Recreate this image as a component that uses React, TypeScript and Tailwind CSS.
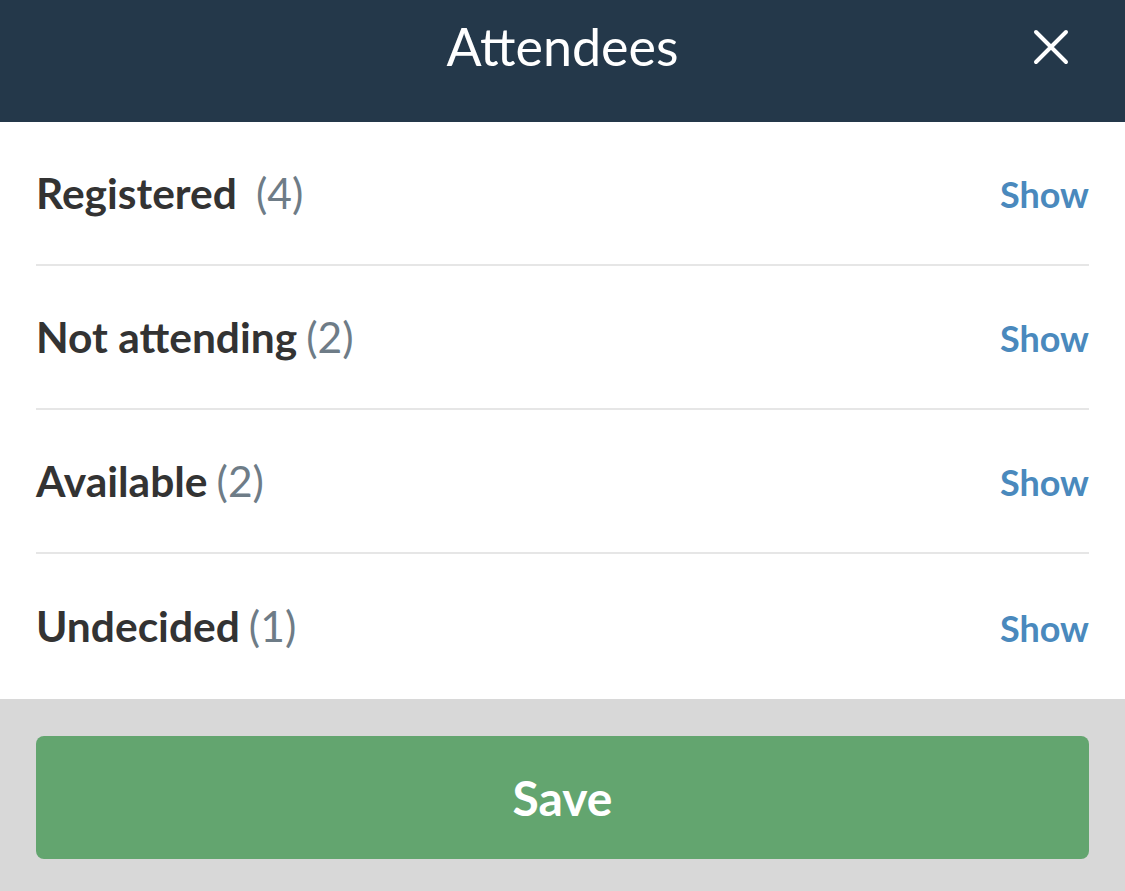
const rows = [
  { label: 'Registered', count: 4, gap: true },
  { label: 'Not attending', count: 2 },
  { label: 'Available', count: 2 },
  { label: 'Undecided', count: 1 },
];

export default function App() {
  return (
    <div className="flex h-[891px] w-full flex-col bg-[#d8d8d8] font-['Lato','Open_Sans',sans-serif]">
      {/* header */}
      <div className="relative flex h-[122px] items-center justify-center bg-[#24384a]">
        <h1 className="pb-[30px] text-[52px] leading-none text-white">Attendees</h1>
        <button className="absolute right-[56px] top-[29px] text-white">
          <svg width="36" height="36" viewBox="0 0 36 36" fill="none" stroke="currentColor" strokeWidth="4" strokeLinecap="round">
            <path d="M3 3L33 33M33 3L3 33" />
          </svg>
        </button>
      </div>

      {/* list */}
      <div className="bg-white px-[36px]">
        {rows.map((r, i) => (
          <div
            key={r.label}
            className={`flex items-center justify-between ${i < rows.length - 1 ? 'h-[144px] border-b-2 border-[#e6e6e6]' : 'h-[145px]'}`}
          >
            <div className="text-[42.5px] leading-none">
              <span className="font-bold text-[#333333]">{r.label}</span>
              <span className={`text-[#6e7c87] ${r.gap ? 'ml-[19px]' : 'ml-[9px]'}`}>({r.count})</span>
            </div>
            <span className="pt-[2px] text-[36px] font-bold leading-none text-[#4a89bd]">Show</span>
          </div>
        ))}
      </div>

      {/* footer */}
      <div className="px-[36px] pt-[37px]">
        <button className="flex h-[123px] w-full items-center justify-center rounded-[8px] bg-[#63a56f] text-[48px] font-bold text-white">
          Save
        </button>
      </div>
    </div>
  );
}
